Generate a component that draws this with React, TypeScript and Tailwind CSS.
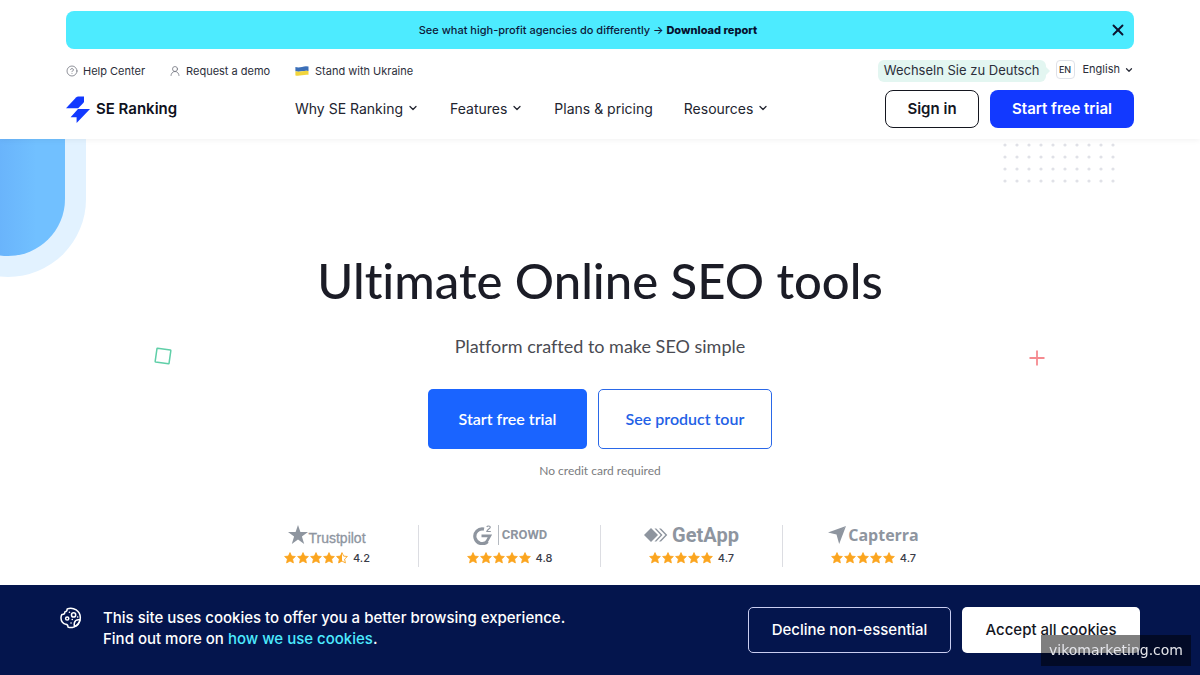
import React from 'react';
import { ChevronDown, CircleHelp, UserRound, X } from 'lucide-react';

const STAR = 'M6 .6l1.6 3.5 3.8.4-2.8 2.6.8 3.8L6 9l-3.4 1.9.8-3.8L.6 4.5l3.8-.4z';

const Star = ({ half = false }: { half?: boolean }) => {
  return <svg viewBox="0 0 12 12" className="h-3 w-3" aria-hidden="true">
      {half ? <>
          <path d={STAR} fill="none" stroke="#fba51f" strokeWidth="0.9" />
          <path d="M6 .6V9l-3.4 1.9.8-3.8L.6 4.5l3.8-.4z" fill="#fba51f" />
        </> : <path d={STAR} fill="#fba51f" stroke="#fba51f" strokeWidth="0.8" strokeLinejoin="round" />}
    </svg>;
};

const SeRankingLogo = () => {
  return <svg viewBox="0 0 24 27" className="h-[27px] w-6" fill="#1239ff" aria-hidden="true">
      <path d="M0 12.3L10 1.4Q11 .5 12.2.5H18V5.2Q18 6.2 17.3 7L12.2 12.3z" />
      <path d="M12 13.1H24L10.6 27v-5.8H4.6z" />
    </svg>;
};

const UkraineFlag = () => {
  return <svg viewBox="0 0 14 10" className="h-[10px] w-[14px]" aria-hidden="true">
      <path d="M.4 1Q3.5 1.8 7 .9T13.5.6V5Q10.5 4.6 7 5.3T.4 5.3z" fill="#3b6fb8" />
      <path d="M.4 5.3Q3.5 6 7 5.3T13.5 5V8.8Q10.5 8.4 7 9.2T.4 9.5z" fill="#f2d53c" />
    </svg>;
};

const CookieIcon = () => {
  return <svg viewBox="0 0 22 22" className="h-[22px] w-[22px] shrink-0" fill="none" stroke="#fff" strokeWidth="1.5" strokeLinecap="round" strokeLinejoin="round" aria-hidden="true">
      <path d="M7.2 1.900C13.500-.4 20.500 4 20.300 10.900c-.1 4.600-3.600 8.600-7.800 9.500-1.700.4-3.200.2-4.500-.3.100-1.600-.8-2.700-2.300-2.900C3.300 17 .9 14.300 1 10.700c0-1.200.4-2.400.9-3.200C4 7.600 5 6.600 4.800 4.900 6.300 4.700 7.200 3.500 7.200 1.900z" />
      <circle cx="13.600" cy="7.900" r="2.100" />
      <circle cx="7.200" cy="11.500" r="1.600" />
      <path d="M20 12.800c-2.500-.4-5 .6-5.600 2.900-.4 1.500-.2 2.600.2 3.800M14.600 19.500c2.700-.5 5.200-3.500 5.400-6.700" />
      <path d="M9.400 5.300h.1M12.200 12.400h.1M11 15.900h.1M17.600 10h.1" />
    </svg>;
};

const TrustpilotLogo = () => {
  return <div className="flex items-end text-[#8e959f]">
      <svg viewBox="0 0 20 19" className="mb-1 h-[19px] w-5" fill="currentColor" aria-hidden="true">
        <path d="M10 0l2.400 7.100H20l-6.100 4.500L16.200 19 10 14.400 3.800 19l2.300-7.400L0 7.100h7.600z" />
      </svg>
      <span className="font-['Liberation_Sans',sans-serif] text-[14px] leading-5 [-webkit-text-stroke:0.3px]">Trustpilot</span>
    </div>;
};

const CrowdLogo = () => {
  return <div className="flex items-center text-[#8e959f]">
      <svg viewBox="0 0 20 20" className="h-5 w-5" fill="none" stroke="currentColor" aria-hidden="true">
        <path d="M12 4.100A7.400 7.400 0 1 0 15.500 16.500" strokeWidth="3.200" />
        <path d="M9.500 10.900h8.400l-3.200 5.800" strokeWidth="2.600" />
        <path d="M14.800 2c.4-1.400 3.500-1.500 3.500.2 0 1.500-3.300 2.100-3.500 4.300h4" strokeWidth="1.100" />
      </svg>
      <span className="ml-1.5 border-l border-[#b5bac1] pl-[3px] font-['Roboto',sans-serif] text-[13px] leading-5 font-bold">CROWD</span>
    </div>;
};

const GetAppLogo = () => {
  return <div className="flex items-center gap-1 text-[#8e959f]">
      <svg viewBox="0 0 24 14" className="h-[14px] w-6" fill="currentColor" aria-hidden="true">
        <path d="M7 0l7 7-7 7-7-7z" />
        <path d="M10.500.6h1.800L18.500 7l-6.200 6.400h-1.800L16.600 7z" />
        <path d="M15 .6h2L23.300 7 17 13.400h-2L21.300 7z" />
      </svg>
      <span className="font-['Roboto',sans-serif] text-[20px] leading-5 font-bold">GetApp</span>
    </div>;
};

const CapterraLogo = () => {
  return <div className="flex items-center text-[#8e959f]">
      <svg viewBox="0 0 18 18" className="h-[18px] w-[18px]" fill="currentColor" aria-hidden="true">
        <path d="M18 0L0 6.500l9.500 2.300z" />
        <path d="M18 0l-6.800 18-2.700-9.400z" />
      </svg>
      <span className="ml-0.5 font-['Open_Sans',sans-serif] text-[16px] leading-5 font-bold">Capterra</span>
    </div>;
};

const navItems = [
  { label: 'Why SE Ranking', menu: true },
  { label: 'Features', menu: true },
  { label: 'Plans & pricing', menu: false },
  { label: 'Resources', menu: true }
];

const ratings = [
  { id: 'trustpilot', logo: <TrustpilotLogo />, score: '4.2', half: true },
  { id: 'crowd', logo: <CrowdLogo />, score: '4.8', half: false },
  { id: 'getapp', logo: <GetAppLogo />, score: '4.7', half: false },
  { id: 'capterra', logo: <CapterraLogo />, score: '4.7', half: false }
];

const Header = () => {
  return <header className="relative z-10 bg-white px-[66px] pt-[11px] pb-[11px] shadow-[0_1px_6px_rgba(0,0,0,0.06)]">
      <div className="grid h-[38px] grid-cols-[1fr_24px] items-center rounded-lg bg-[#4debff] text-[11px] font-medium text-[#0d1a3a]">
        <p className="text-center">
          See what high-profit agencies do differently → <a href="#report" className="font-extrabold text-[#05112e]">Download report</a>
        </p>
        <button aria-label="Close" className="mr-[7px] justify-self-end">
          <X className="h-[18px] w-[18px] text-[#0b1430]" strokeWidth={2.500} />
        </button>
      </div>

      <div className="mt-[11px] flex h-[22px] items-center text-[11px] text-[#2b2e3a]">
        <div className="flex w-[229px] items-center gap-6">
          <a href="#help" className="flex items-center gap-[5px]">
            <CircleHelp className="h-3 w-3 text-[#6b6e78]" strokeWidth={1.500} />
            Help Center
          </a>
          <a href="#demo" className="flex items-center gap-[5px]">
            <UserRound className="h-3 w-3 text-[#6b6e78]" strokeWidth={1.500} />
            Request a demo
          </a>
        </div>
        <a href="#ukraine" className="flex items-center gap-1.5">
          <UkraineFlag />
          Stand with Ukraine
        </a>
        <div className="ml-auto flex items-center">
          <a href="#de" className="flex h-[22px] items-center rounded-md bg-[#e3f6f1] px-1.5 text-[13px]">Wechseln Sie zu Deutsch</a>
          <svg viewBox="0 0 4 8" className="h-2 w-1" fill="#e3f6f1" aria-hidden="true">
            <path d="M0 0l4 4-4 4z" />
          </svg>
          <button className="ml-1.5 flex items-center self-start">
            <span className="flex h-[19px] w-[19px] items-center justify-center rounded-sm border border-[#dfe1e8] text-[9px] font-medium">EN</span>
            <span className="ml-2">English</span>
            <ChevronDown className="ml-1 h-[10px] w-[10px]" strokeWidth={3} />
          </button>
        </div>
      </div>

      <div className="mt-2 flex h-[38px] items-center">
        <a href="#home" className="flex w-[229px] items-center gap-1.5 text-[15px] font-semibold text-[#0e1120]">
          <SeRankingLogo />
          SE Ranking
        </a>
        <nav className="flex items-center gap-[31px] pb-0.5 text-[14px] text-[#22242f]">
          {navItems.map(item => <a key={item.label} href="#nav" className="flex items-center gap-1 whitespace-nowrap">
              {item.label}
              {item.menu && <ChevronDown className="h-3 w-3" strokeWidth={2.500} />}
            </a>)}
        </nav>
        <div className="ml-auto flex h-full items-center gap-[11px] text-[15px] font-semibold">
          <button className="h-full w-[94px] rounded-lg border border-[#14161f] text-[#14161f]">Sign in</button>
          <button className="h-full w-[144px] rounded-lg bg-[#1239ff] text-white">Start free trial</button>
        </div>
      </div>
    </header>;
};

const Decorations = () => {
  return <div aria-hidden="true">
      <div className="absolute top-0 -left-[70px] h-[138px] w-[156px] rounded-b-[78px] bg-[#e2f2ff] px-[21px] pb-[21px]">
        <div className="h-full rounded-b-[57px] bg-linear-to-r from-[#69b3fb] from-40% to-[#71c0ff] to-75%" />
      </div>
      <svg className="absolute top-0 right-[84px] h-12 w-[114px]">
        <defs>
          <pattern id="dots" width="12" height="12" patternUnits="userSpaceOnUse">
            <circle cx="3" cy="6" r="1.600" fill="#e0e1e7" />
          </pattern>
        </defs>
        <rect width="114" height="48" fill="url(#dots)" />
      </svg>
      <svg viewBox="0 0 18 18" className="absolute top-[208px] left-[154px] h-[18px] w-[18px]" fill="none" stroke="#5fcfa8" strokeWidth="1.500">
        <rect x="2" y="2" width="14" height="14" rx="0.500" transform="rotate(8 9 9)" />
      </svg>
      <svg viewBox="0 0 16 16" className="absolute top-[211px] right-[155px] h-4 w-4" stroke="#f58a90" strokeWidth="1.800">
        <path d="M8 .5v15M.5 8h15" />
      </svg>
    </div>;
};

const Hero = () => {
  return <main className="relative flex flex-col items-center overflow-hidden px-6 pt-[109px] pb-[108px] font-['Lato',sans-serif] [font-variant-ligatures:none]">
      <Decorations />
      <h1 className="text-center text-[49px] leading-[64px] font-medium text-[#1b1c26]">Ultimate Online SEO tools</h1>
      <p className="mt-[22px] text-[18px] leading-6 text-[#4a4b52]">Platform crafted to make SEO simple</p>
      <div className="mt-[31px] flex gap-[11px] text-[16px] font-semibold">
        <button className="h-[60px] w-[159px] rounded-[5px] bg-[#1a64ff] text-white">Start free trial</button>
        <button className="h-[60px] w-[174px] rounded-[5px] border border-[#2a68e8] text-[#2361e6]">See product tour</button>
      </div>
      <p className="mt-[14px] text-[12px] leading-4 text-[#7b7c80]">No credit card required</p>
      <ul className="mt-[46px] grid grid-cols-4 [&>li+li]:border-l [&>li+li]:border-[#dcdde2]">
        {ratings.map(item => <li key={item.id} className="flex h-[42px] w-[182px] flex-col items-center">
            {item.logo}
            <div className="mt-auto flex items-center gap-px pb-px">
              {[0, 1, 2, 3, 4].map(i => <Star key={i} half={item.half && i === 4} />)}
              <span className="ml-1 font-['Inter',sans-serif] text-[11px] leading-4 font-medium text-[#3a3c48]">{item.score}</span>
            </div>
          </li>)}
      </ul>
    </main>;
};

const CookieBar = () => {
  return <section aria-label="Cookies" className="fixed inset-x-0 bottom-0 z-20 flex items-start bg-[#04154d] px-[60px] py-[22px] text-[15px] font-medium text-white">
      <CookieIcon />
      <p className="ml-[21px] leading-[21px]">
        This site uses cookies to offer you a better browsing experience.
        <br />
        Find out more on <a href="#cookies" className="text-[#4debff]">how we use cookies</a>.
      </p>
      <div className="ml-auto flex shrink-0 gap-[11px]">
        <button className="h-[46px] w-[203px] rounded-[5px] border border-[#c9cdf0]">Decline non-essential</button>
        <button className="h-[46px] w-[178px] rounded-[5px] bg-white text-[#14161f]">Accept all cookies</button>
      </div>
    </section>;
};

export default function App() {
  return <div className="min-h-screen bg-white font-['Inter',sans-serif]">
      <Header />
      <Hero />
      <CookieBar />
      <div className="fixed right-[9px] bottom-[9px] z-30 bg-black/50 px-2 py-1 font-['DejaVu_Sans',sans-serif] text-[14px] leading-[23px] text-[#e4e5ea]">
        vikomarketing.com
      </div>
    </div>;
}
